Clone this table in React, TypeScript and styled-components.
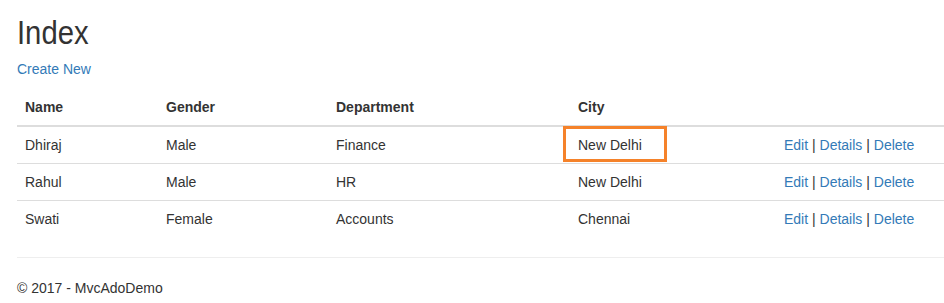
import React from "react";
import styled, { createGlobalStyle } from "styled-components";

interface Employee {
  name: string;
  gender: string;
  department: string;
  city: string;
  highlight?: boolean;
}

const employees: Employee[] = [
  { name: "Dhiraj", gender: "Male", department: "Finance", city: "New Delhi", highlight: true },
  { name: "Rahul", gender: "Male", department: "HR", city: "New Delhi" },
  { name: "Swati", gender: "Female", department: "Accounts", city: "Chennai" },
];

const App: React.FC = () => {
  return (
    <>
      <GlobalStyle />
      <BodyContent>
        <Title>Index</Title>
        <Para>
          <Link href="#">Create New</Link>
        </Para>
        <Table>
          <colgroup>
            <col style={{ width: 141 }} />
            <col style={{ width: 170 }} />
            <col style={{ width: 242 }} />
            <col style={{ width: 206 }} />
            <col />
          </colgroup>
          <thead>
            <tr>
              <Th>Name</Th>
              <Th>Gender</Th>
              <Th>Department</Th>
              <Th>City</Th>
              <Th></Th>
            </tr>
          </thead>
          <tbody>
            {employees.map((e) => (
              <tr key={e.name}>
                <Td>{e.name}</Td>
                <Td>{e.gender}</Td>
                <Td>{e.department}</Td>
                <Td>
                  {e.city}
                  {e.highlight && <Marker />}
                </Td>
                <Td>
                  <Link href="#">Edit</Link> | <Link href="#">Details</Link> |{" "}
                  <Link href="#">Delete</Link>
                </Td>
              </tr>
            ))}
          </tbody>
        </Table>
        <Rule />
        <Footer>
          <Para>© 2017 - MvcAdoDemo</Para>
        </Footer>
      </BodyContent>
    </>
  );
};

export default App;

// ---------- styled-components ----------

const GlobalStyle = createGlobalStyle`
  html, body {
    margin: 0;
    padding: 0;
    background: #ffffff;
    overflow: hidden;
  }
  body {
    font-family: "Liberation Sans", Arial, Helvetica, sans-serif;
    font-size: 14px;
    line-height: 20px;
    color: #333333;
  }
  * {
    box-sizing: border-box;
  }
`;

const BodyContent = styled.div`
  padding: 0 0 0 17px;
  width: 961px;
  display: flow-root;
`;

const Title = styled.h1`
  margin: 14px 0 8px;
  font-family: "Liberation Sans", Arial, sans-serif;
  font-size: 34px;
  font-weight: 400;
  line-height: 37px;
  color: #333333;
  transform: scaleX(0.86);
  transform-origin: left center;
`;

const Para = styled.p`
  margin: 0 0 10px;
`;

const Link = styled.a`
  color: #337ab7;
  text-decoration: none;
`;

const Table = styled.table`
  width: 100%;
  table-layout: fixed;
  border-collapse: collapse;
  border-spacing: 0;
  margin-bottom: 20px;
`;

const Th = styled.th`
  padding: 8px;
  text-align: left;
  vertical-align: bottom;
  font-weight: bold;
  line-height: 20px;
  border-bottom: 2px solid #dddddd;
`;

const Td = styled.td`
  position: relative;
  padding: 8px;
  line-height: 20px;
  vertical-align: top;
  border-top: 1px solid #dddddd;
  white-space: nowrap;
`;

const Marker = styled.span`
  position: absolute;
  left: -7px;
  top: -1px;
  width: 104px;
  height: 36px;
  border: 3px solid #f5822a;
  pointer-events: none;
`;

const Rule = styled.hr`
  margin: 20px 0;
  border: 0;
  border-top: 1px solid #eeeeee;
  height: 0;
`;

const Footer = styled.footer``;
